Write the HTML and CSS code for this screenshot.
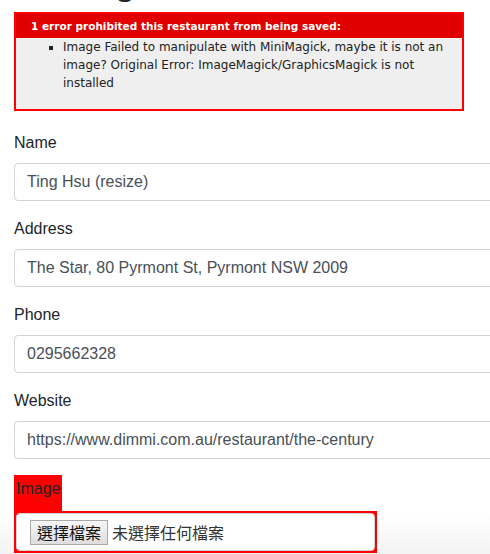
FILE: index.html
```html
<!DOCTYPE html>
<html lang="en">
<head>
  <meta charset="UTF-8" />
  <title>Editing Restaurant</title>
  <link rel="stylesheet" href="styles.css">
</head>
<body>
  <div class="container">
    <h1>Editing Restaurant</h1>

    <form class="restaurant-form">
      <div id="error_explanation">
        <h2>1 error prohibited this restaurant from being saved:</h2>
        <ul>
          <li>Image Failed to manipulate with MiniMagick, maybe it is not an image? Original Error: ImageMagick/GraphicsMagick is not installed</li>
        </ul>
      </div>

      <div class="form-group">
        <label>Name</label>
        <input class="form-control" type="text" value="Ting Hsu (resize)" />
      </div>

      <div class="form-group">
        <label>Address</label>
        <input class="form-control" type="text" value="The Star, 80 Pyrmont St, Pyrmont NSW 2009" />
      </div>

      <div class="form-group">
        <label>Phone</label>
        <input class="form-control" type="text" value="0295662328" />
      </div>

      <div class="form-group">
        <label>Website</label>
        <input class="form-control" type="text" value="https://www.dimmi.com.au/restaurant/the-century" />
      </div>

      <div class="form-group">
        <div class="field_with_errors"><label>Image</label></div>
        <div class="field_with_errors">
          <div class="form-control file-control">
            <button type="button" class="file-btn">選擇檔案</button>
            <span class="file-name">未選擇任何檔案</span>
          </div>
        </div>
      </div>
    </form>
  </div>
</body>
</html>
```

FILE: styles.css
```css
* {
  box-sizing: border-box;
}
html {
  overflow: hidden;
}
body {
  margin: 0;
  font-family: "Liberation Sans", Arial, sans-serif;
  font-size: 16px;
  line-height: 1.5;
  color: #212529;
  background: linear-gradient(to bottom, #fff 515px, #f3f3f3 554px);
  min-height: 554px;
}
.container {
  padding: 0 14px;
  width: 560px;
}
h1 {
  margin: -44px 0 8px;
  font-size: 40px;
  font-weight: 500;
  line-height: 1.2;
}
#error_explanation {
  width: 450px;
  border: 2px solid #ff0000;
  padding: 7px 7px 0;
  margin-bottom: 20px;
  background-color: #efefef;
}
#error_explanation h2 {
  text-align: left;
  font-family: "DejaVu Sans", Verdana, sans-serif;
  font-weight: bold;
  padding: 5px 5px 5px 15px;
  font-size: 10.5px;
  line-height: 14px;
  margin: -7px -7px 0;
  background-color: #e00000;
  color: #fff;
}
#error_explanation ul {
  margin: 0 0 17px;
  padding-left: 40px;
}
#error_explanation ul li {
  font-family: "DejaVu Sans", Verdana, sans-serif;
  font-size: 12px;
  line-height: 18px;
  list-style: square;
  color: #222;
}
.form-group {
  margin-bottom: 16px;
}
label {
  display: inline-block;
  margin-bottom: 8px;
}
.form-control {
  display: block;
  width: 100%;
  height: 38px;
  padding: 6px 12px;
  font-family: inherit;
  font-size: 16px;
  line-height: 1.5;
  color: #495057;
  background-color: #fff;
  border: 1px solid #ced4da;
  border-radius: 4px;
}
.field_with_errors {
  padding: 2px;
  background-color: #ff0000;
  display: table;
}
.file-control {
  width: 359px;
  display: flex;
  align-items: center;
  gap: 4px;
  padding: 0 12px 0 13px;
}
.file-btn {
  height: 25px;
  padding: 0 6px;
  font-family: "Noto Sans CJK TC", sans-serif;
  font-size: 16px;
  line-height: 22px;
  color: #111;
  background: linear-gradient(to bottom, #f6f6f6, #dedede);
  border: 1px solid #a9a9a9;
  border-radius: 0;
}
.file-name {
  font-family: "Noto Sans CJK TC", sans-serif;
  font-size: 16px;
  color: #333;
}
```
